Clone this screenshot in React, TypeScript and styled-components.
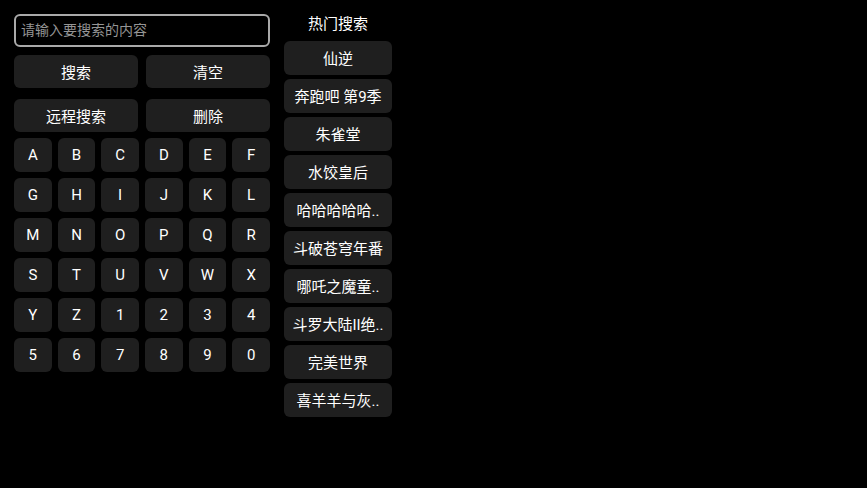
import React from "react";
import styled, { createGlobalStyle } from "styled-components";

const Global = createGlobalStyle`
  html, body { margin: 0; padding: 0; background: #000; }
  body { width: 867px; height: 488px; overflow: hidden; font-family: Roboto, "Noto Sans CJK SC", sans-serif; }
`;

const Page = styled.div`
  display: flex;
  gap: 14px;
  padding: 14px 0 0 14px;
  height: 488px;
  box-sizing: border-box;
  background: #000;
`;

const Left = styled.div`
  width: 256px;
  display: flex;
  flex-direction: column;
`;

const SearchInput = styled.input`
  box-sizing: border-box;
  width: 256px;
  height: 33px;
  border: 2px solid #a9a9a9;
  border-radius: 6px;
  background: #000;
  color: #fff;
  padding: 0 5px 1px;
  font-size: 14px;
  font-family: Roboto, "Noto Sans CJK SC", sans-serif;
  outline: none;
  &::placeholder { color: #959595; }
`;

const ActionRow = styled.div<{ $top: number }>`
  display: grid;
  grid-template-columns: 1fr 1fr;
  gap: 8px;
  margin-top: ${(p) => p.$top}px;
`;

const Btn = styled.div<{ $h?: number }>`
  height: ${(p) => p.$h ?? 33}px;
  background: #1f1f1f;
  border-radius: 6px;
  color: #fff;
  font-size: 15px;
  display: flex;
  align-items: center;
  justify-content: center;
  white-space: nowrap;
  padding-bottom: 1px;
  box-sizing: border-box;
`;

const Keys = styled.div`
  display: grid;
  grid-template-columns: repeat(6, 1fr);
  column-gap: 6px;
  row-gap: 6px;
  margin-top: 6px;
`;

const Key = styled(Btn)`
  height: 34px;
  font-size: 15px;
`;

const Right = styled.div`
  width: 108px;
  display: flex;
  flex-direction: column;
  gap: 4px;
`;

const Title = styled.div`
  color: #fff;
  font-size: 15px;
  height: 23px;
  line-height: 20px;
  text-align: center;
`;

const Hot = styled(Btn)`
  height: 34px;
  padding: 0 6px 1px;
  overflow: hidden;
`;

const keys = "ABCDEFGHIJKLMNOPQRSTUVWXYZ1234567890".split("");
const hots = [
  "仙逆",
  "奔跑吧 第9季",
  "朱雀堂",
  "水饺皇后",
  "哈哈哈哈哈..",
  "斗破苍穹年番",
  "哪吒之魔童..",
  "斗罗大陆II绝..",
  "完美世界",
  "喜羊羊与灰..",
];

export default function App() {
  return (
    <>
      <Global />
      <Page>
        <Left>
          <SearchInput placeholder="请输入要搜索的内容" />
          <ActionRow $top={8}>
            <Btn>搜索</Btn>
            <Btn>清空</Btn>
          </ActionRow>
          <ActionRow $top={11}>
            <Btn>远程搜索</Btn>
            <Btn>删除</Btn>
          </ActionRow>
          <Keys>
            {keys.map((k) => (
              <Key key={k}>{k}</Key>
            ))}
          </Keys>
        </Left>
        <Right>
          <Title>热门搜索</Title>
          {hots.map((h) => (
            <Hot key={h}>{h}</Hot>
          ))}
        </Right>
      </Page>
    </>
  );
}
